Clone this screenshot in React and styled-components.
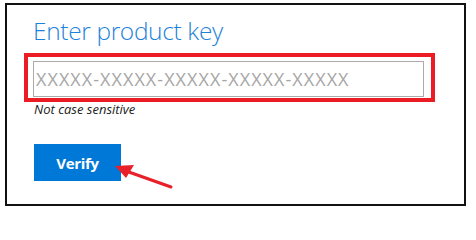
import React from 'react';
import styled, { createGlobalStyle } from 'styled-components';

const GlobalStyle = createGlobalStyle`
  html, body {
    margin: 0;
    padding: 0;
    background: #ffffff;
  }
  body {
    font-family: "Open Sans", "Noto Sans", "Liberation Sans", sans-serif;
  }
`;

const Card = styled.div`
  position: relative;
  box-sizing: border-box;
  width: 461px;
  height: 203px;
  margin: 3px 0 0 5px;
  border: 2px solid #111111;
  padding: 11px 0 0 26px;
  display: flex;
  flex-direction: column;
  align-items: flex-start;
`;

const Title = styled.h1`
  margin: 0;
  font-size: 24.5px;
  line-height: 30px;
  font-weight: 300;
  color: #1f82d9;
  letter-spacing: -0.35px;
`;

const Highlight = styled.div`
  margin: 7px 0 0 -9px;
  padding: 4px 7px 1px 5px;
  border: 4px solid #ec1c24;
  display: flex;
`;

const KeyInput = styled.input`
  box-sizing: border-box;
  width: 391px;
  height: 36px;
  margin: 0;
  padding: 0 0 0 2px;
  border: 1px solid #ababab;
  outline: none;
  font-family: "Open Sans", "Noto Sans", sans-serif;
  font-size: 18px;
  letter-spacing: 1.05px;
  color: #333;

  &::placeholder {
    color: #a6a6a6;
  }
`;

const Hint = styled.p`
  margin: 1px 0 0 1px;
  font-size: 13px;
  line-height: 13px;
  font-style: italic;
  color: #222222;
`;

const VerifyButton = styled.button`
  margin: 28px 0 0 1px;
  width: 87px;
  height: 37px;
  border: none;
  background: #0078d7;
  color: #ffffff;
  font-family: "Open Sans", "Noto Sans", sans-serif;
  font-size: 15px;
  font-weight: 700;
  letter-spacing: -0.3px;
  cursor: pointer;
`;

const Pointer = styled.svg`
  position: absolute;
  left: 95px;
  top: 147px;
  overflow: visible;
`;

const App = () => {
  return (
    <>
      <GlobalStyle />
      <Card>
        <Title>Enter product key</Title>
        <Highlight>
          <KeyInput type="text" placeholder="XXXXX-XXXXX-XXXXX-XXXXX-XXXXX" />
        </Highlight>
        <Hint>Not case sensitive</Hint>
        <VerifyButton type="button">Verify</VerifyButton>
        <Pointer width="80" height="45" viewBox="0 0 80 45">
          {/* tip sits over the button's right edge */}
          <line x1="69" y1="35" x2="24" y2="19" stroke="#e8202a" strokeWidth="3" strokeLinecap="round" />
          <polygon points="13,14 32,13 24,26" fill="#e8202a" />
        </Pointer>
      </Card>
    </>
  );
};

export default App;
